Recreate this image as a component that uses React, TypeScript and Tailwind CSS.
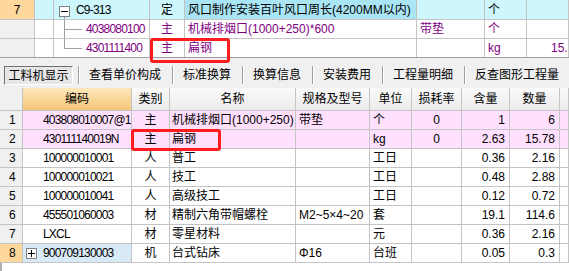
import React from 'react';

const line = 'border-[#c4c4c4]';
const cell = `h-full shrink-0 flex items-center border-r ${line} overflow-hidden whitespace-nowrap`;
const num = 'tracking-[-0.8px]';

type Row = {
  n: string;
  code: string;
  t: string;
  name: string;
  spec?: string;
  unit: string;
  loss?: string;
  han: string;
  qty: string;
  pink?: boolean;
  sel?: boolean;
};

const rows: Row[] = [
  { n: '1', code: '403808010007@1', t: '主', name: '机械排烟口(1000+250)', spec: '带垫', unit: '个', loss: '0', han: '1', qty: '6', pink: true },
  { n: '2', code: '430111140019N', t: '主', name: '扁钢', unit: 'kg', loss: '0', han: '2.63', qty: '15.78', pink: true },
  { n: '3', code: '100000010001', t: '人', name: '普工', unit: '工日', han: '0.36', qty: '2.16' },
  { n: '4', code: '100000010021', t: '人', name: '技工', unit: '工日', han: '0.48', qty: '2.88' },
  { n: '5', code: '100000010041', t: '人', name: '高级技工', unit: '工日', han: '0.12', qty: '0.72' },
  { n: '6', code: '455501060003', t: '材', name: '精制六角带帽螺栓', spec: 'M2~5×4~20', unit: '套', han: '19.1', qty: '114.6' },
  { n: '7', code: 'LXCL', t: '材', name: '零星材料', unit: '元', han: '0.36', qty: '2.16' },
  { n: '8', code: '900709130003', t: '机', name: '台式钻床', spec: 'Φ16', unit: '台班', han: '0.05', qty: '0.3', sel: true },
];

const tabs = ['查看单价构成', '标准换算', '换算信息', '安装费用', '工程量明细', '反查图形工程量'];

function TopGrid() {
  const purple = 'text-[#800080]';
  return (
    <div className="border-b border-[#a0a0a0] bg-white">
      {/* parent row 7 */}
      <div className={`flex h-[20px] border-b ${line}`}>
        <div className={`${cell} w-[35px] justify-center bg-[#fdd79b]`}>7</div>
        <div className={`${cell} w-[19px] bg-[#cdf7fd]`} />
        <div className={`${cell} relative w-[96px] bg-[#cdf7fd] pl-[22px] ${num}`}>
          <div className="absolute left-[5px] top-[6px] flex h-[11px] w-[11px] items-center justify-center border border-[#808080] bg-white">
            <div className="h-px w-[7px] bg-black" />
          </div>
          <div className="absolute bottom-0 left-[10px] top-[17px] w-px bg-[#a0a0a0]" />
          C9-313
        </div>
        <div className={`${cell} w-[35px] justify-center bg-[#cdf7fd]`}>定</div>
        <div className={`${cell} w-[232px] bg-[#a9e5f5] pl-[3px]`}>风口制作安装百叶风口周长(4200MM以内)</div>
        <div className={`${cell} w-[68px] bg-[#cdf7fd]`} />
        <div className={`${cell} w-[42px] bg-[#cdf7fd] pl-[3px]`}>个</div>
        <div className={`${cell} w-[42px] bg-[#cdf7fd]`} />
      </div>
      {/* child 1 */}
      <div className={`flex h-[19px] border-b ${line} ${purple}`}>
        <div className={`${cell} w-[35px] bg-[#f0f0f0]`} />
        <div className={`${cell} w-[19px]`} />
        <div className={`${cell} relative w-[96px] pl-[32px] ${num}`}>
          <div className="absolute bottom-0 left-[10px] top-0 w-px bg-[#a0a0a0]" />
          <div className="absolute left-[10px] top-[9px] h-px w-[18px] bg-[#a0a0a0]" />
          4038080100
        </div>
        <div className={`${cell} w-[35px] justify-center`}>主</div>
        <div className={`${cell} w-[232px] pl-[3px]`}>机械排烟口(1000+250)*600</div>
        <div className={`${cell} w-[68px] pl-[3px]`}>带垫</div>
        <div className={`${cell} w-[42px] pl-[3px]`}>个</div>
        <div className={`${cell} w-[42px]`} />
      </div>
      {/* child 2 */}
      <div className={`flex h-[18px] ${purple}`}>
        <div className={`${cell} w-[35px] bg-[#f0f0f0]`} />
        <div className={`${cell} w-[19px]`} />
        <div className={`${cell} relative w-[96px] pl-[32px] ${num}`}>
          <div className="absolute left-[10px] top-0 h-[10px] w-px bg-[#a0a0a0]" />
          <div className="absolute left-[10px] top-[9px] h-px w-[18px] bg-[#a0a0a0]" />
          4301111400
        </div>
        <div className={`${cell} w-[35px] justify-center`}>主</div>
        <div className={`${cell} w-[232px] pl-[3px]`}>扁钢</div>
        <div className={`${cell} w-[68px]`} />
        <div className={`${cell} w-[42px] pl-[3px]`}>kg</div>
        <div className={`${cell} w-[42px] pl-[24px]`}>15.78</div>
      </div>
    </div>
  );
}

function Tabs() {
  return (
    <div className="flex h-[30px] items-start whitespace-nowrap pl-[4px] pt-[8px]">
      <div className="flex h-[19px] w-[69px] shrink-0 items-center justify-center border border-b-white border-l-[#707070] border-r-white border-t-[#707070] bg-[#e6e6e6]">
        工料机显示
      </div>
      <div className="ml-[5px] h-[18px] w-px shrink-0 bg-[#a0a0a0]" />
      <div className="h-[18px] w-px shrink-0 bg-white" />
      {tabs.map((t) => (
        <React.Fragment key={t}>
          <div className="flex h-[18px] shrink-0 items-center pl-[9px] pr-[11px]">{t}</div>
          <div className="h-[18px] w-px shrink-0 bg-[#a0a0a0]" />
          <div className="h-[18px] w-px shrink-0 bg-white" />
        </React.Fragment>
      ))}
    </div>
  );
}

function BottomGrid() {
  const hcell = `${cell} justify-center border-b bg-linear-to-b from-[#fafafa] to-[#ebebeb]`;
  return (
    <div className="bg-white">
      <div className="flex h-[23px]">
        <div className={`${cell} w-[23px] border-b bg-[#f0f0f0]`} />
        <div className={`${cell} w-[109px] justify-center border-b bg-linear-to-b from-[#fde7bb] to-[#f5c676]`}>编码</div>
        <div className={`${hcell} w-[38px]`}>类别</div>
        <div className={`${hcell} w-[126px]`}>名称</div>
        <div className={`${hcell} w-[74px]`}>规格及型号</div>
        <div className={`${hcell} w-[42px]`}>单位</div>
        <div className={`${hcell} w-[50px]`}>损耗率</div>
        <div className={`${hcell} w-[48px]`}>含量</div>
        <div className={`${hcell} w-[50px]`}>数量</div>
        <div className={`${hcell} w-[9px]`} />
      </div>
      {rows.map((r) => {
        const bg = r.pink ? 'bg-[#ffe1ff]' : 'bg-white';
        return (
          <div key={r.n} className={`flex h-[19px] border-b ${line}`}>
            <div className={`${cell} w-[23px] pl-[9px] ${r.sel ? 'bg-[#fdd79b]' : 'bg-[#f0f0f0]'}`}>{r.n}</div>
            <div className={`${cell} relative w-[109px] pl-[20px] ${num} ${r.sel ? 'bg-[#d9eaf7]' : bg}`}>
              {r.sel && (
                <div className="absolute left-[3px] top-[4px] flex h-[11px] w-[11px] items-center justify-center border border-[#808080] bg-white">
                  <div className="h-px w-[7px] bg-black" />
                  <div className="absolute h-[7px] w-px bg-black" />
                </div>
              )}
              {r.code}
            </div>
            <div className={`${cell} w-[38px] justify-center ${bg}`}>{r.t}</div>
            <div className={`${cell} w-[126px] pl-[2px] ${bg}`}>{r.name}</div>
            <div className={`${cell} w-[74px] pl-[3px] ${bg}`}>{r.spec}</div>
            <div className={`${cell} w-[42px] pl-[3px] ${bg}`}>{r.unit}</div>
            <div className={`${cell} w-[50px] justify-center ${bg}`}>{r.loss}</div>
            <div className={`${cell} w-[48px] justify-end pr-[4px] ${bg}`}>{r.han}</div>
            <div className={`${cell} w-[50px] justify-end pr-[4px] ${bg}`}>{r.qty}</div>
            <div className={`${cell} w-[9px] ${bg}`} />
          </div>
        );
      })}
      <div className="h-[8px] border-l-2 border-[#b0b0b0]" />
    </div>
  );
}

export default function App() {
  return (
    <div className="relative h-[271px] w-[569px] overflow-hidden bg-[#f0f0f0] font-['Liberation_Sans','Noto_Sans_CJK_SC',sans-serif] text-[12px] leading-none text-black">
      <TopGrid />
      <Tabs />
      <BottomGrid />
      {/* red annotation boxes */}
      <div className="pointer-events-none absolute left-[150px] top-[38px] h-[25px] w-[80px] rounded-[3px] border-[3px] border-[#ff1c1c]" />
      <div className="pointer-events-none absolute left-[131px] top-[129px] h-[22px] w-[90px] rounded-[3px] border-[3px] border-[#ff1c1c]" />
    </div>
  );
}
